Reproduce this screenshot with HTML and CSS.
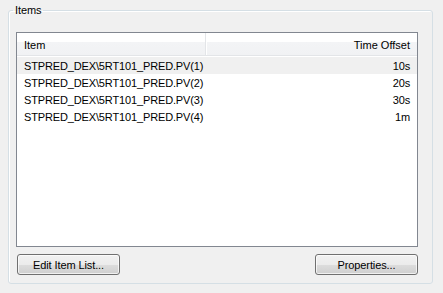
FILE: index.html
```html
<!DOCTYPE html>
<html>
<head>
<meta charset="utf-8">
<link rel="stylesheet" href="styles.css">
</head>
<body>
<fieldset class="group">
  <legend class="group-title">Items</legend>
  <div class="list">
    <div class="list-head">
      <div class="col col-item">Item</div>
      <div class="col col-offset">Time Offset</div>
    </div>
    <div class="row row-hover"><span class="cell-item">STPRED_DEX\5RT101_PRED.PV(1)</span><span class="cell-offset">10s</span></div>
    <div class="row"><span class="cell-item">STPRED_DEX\5RT101_PRED.PV(2)</span><span class="cell-offset">20s</span></div>
    <div class="row"><span class="cell-item">STPRED_DEX\5RT101_PRED.PV(3)</span><span class="cell-offset">30s</span></div>
    <div class="row"><span class="cell-item">STPRED_DEX\5RT101_PRED.PV(4)</span><span class="cell-offset">1m</span></div>
  </div>
  <div class="actions">
    <button class="btn">Edit Item List...</button>
    <button class="btn">Properties...</button>
  </div>
</fieldset>
</body>
</html>
```

FILE: styles.css
```css
html, body {
  margin: 0;
  padding: 0;
  background: #f0f0f0;
  font-family: "Liberation Sans", Arial, sans-serif;
  font-size: 11px;
  color: #000;
}

.group {
  margin: 4px 10px 0 8px;
  padding: 15px 14px 8px 7px;
  border: 1px solid #d5dfe5;
  border-radius: 3px;
  box-shadow: inset 1px 1px 0 #fff;
}

.group-title {
  padding: 0 2px;
  margin-left: -3px;
  line-height: 13px;
  letter-spacing: -0.1px;
}

.list {
  height: 213px;
  border: 1px solid #828790;
  background: #fff;
  display: flex;
  flex-direction: column;
}

.list-head {
  display: flex;
  height: 22px;
  background: linear-gradient(to bottom, #ffffff 0, #ffffff 9px, #f3f4f6 9px, #f1f2f4 100%);
  border-bottom: 1px solid #e3e5e8;
  margin-bottom: 1px;
}

.col {
  display: flex;
  align-items: center;
  line-height: 13px;
  padding-top: 3px;
}

.col-item {
  width: 181px;
  padding-left: 7px;
  border-right: 1px solid #e3e5e8;
  box-shadow: 1px 0 0 #fff;
}

.col-offset {
  flex: 1;
  justify-content: flex-end;
  padding-right: 7px;
}

.row {
  display: flex;
  justify-content: space-between;
  align-items: center;
  height: 17px;
  padding: 1px 7px 0;
  box-sizing: border-box;
  letter-spacing: -0.14px;
}

.row-hover {
  background: #f0f0f0;
}

.actions {
  display: flex;
  justify-content: space-between;
  margin-top: 7px;
  padding-left: 1px;
}

.btn {
  width: 103px;
  height: 21px;
  padding: 0;
  font-family: inherit;
  font-size: 11px;
  color: #000;
  border: 1px solid #707070;
  border-radius: 3px;
  background: linear-gradient(to bottom, #f2f2f2 0, #ebebeb 50%, #dddddd 50%, #cfcfcf 100%);
  box-shadow: inset 0 0 0 1px rgba(255,255,255,0.7);
  letter-spacing: -0.1px;
}
```
